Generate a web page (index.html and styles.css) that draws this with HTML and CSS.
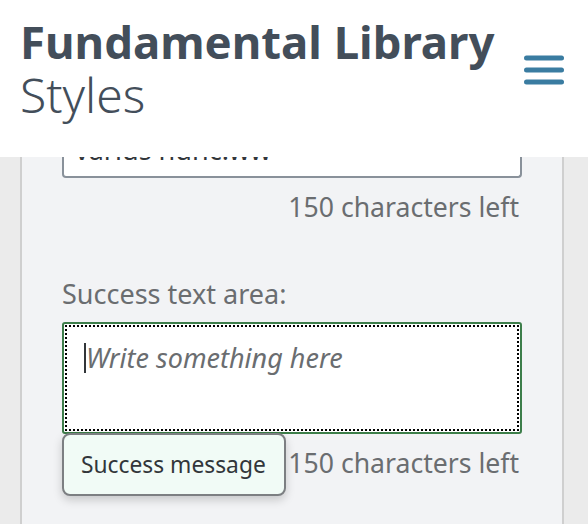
FILE: index.html
```html
<!DOCTYPE html>
<html lang="en">
<head>
<meta charset="utf-8">
<title>Fundamental Library Styles</title>
<link rel="stylesheet" href="styles.css">
</head>
<body>
<header class="site-header">
  <div class="brand">
    <div class="brand-title">Fundamental Library</div>
    <div class="brand-sub">Styles</div>
  </div>
  <button class="menu-btn" aria-label="Menu">
    <svg width="40" height="30" viewBox="0 0 40 30">
      <g stroke="#3a7ca1" stroke-width="5" stroke-linecap="round">
        <line x1="2.5" y1="3" x2="37.5" y2="3"/>
        <line x1="2.5" y1="15" x2="37.5" y2="15"/>
        <line x1="2.5" y1="27" x2="37.5" y2="27"/>
      </g>
    </svg>
  </button>
</header>
<main class="page">
  <section class="panel">
    <div class="field">
      <div class="input">varius nunc.ww</div>
      <div class="counter">150 characters left</div>
    </div>
    <div class="field field-success">
      <label class="label">Success text area:</label>
      <div class="textarea">
        <span class="caret"></span><span class="placeholder">Write something here</span>
      </div>
      <div class="counter counter-2">150 characters left</div>
      <div class="popover">Success message</div>
    </div>
  </section>
</main>
</body>
</html>
```
FILE: styles.css
```css
* { box-sizing: border-box; }
html, body { margin: 0; padding: 0; }
body {
  background: #ebebeb;
  font-family: "Noto Sans", "Open Sans", sans-serif;
  color: #32363a;
  height: 524px;
  overflow: hidden;
}
.site-header {
  position: fixed;
  top: 0; left: 0; right: 0;
  height: 157px;
  background: #fff;
  display: flex;
  align-items: flex-start;
  justify-content: space-between;
  padding: 14px 24px 0 20px;
  z-index: 10;
}
.brand-title {
  font-size: 45.5px;
  font-weight: 700;
  line-height: 54px;
  color: #434e5a;
}
.brand-sub {
  font-size: 48px;
  font-weight: 300;
  line-height: 54px;
  color: #434e5a;
}
.menu-btn {
  margin-top: 41px;
  padding: 0;
  border: 0;
  background: none;
  display: block;
}
.menu-btn svg { display: block; }
.page {
  margin: 0 24px 0 20px;
  height: 524px;
}
.panel {
  background: #f2f3f5;
  border-left: 2px solid #cfcfcf;
  border-right: 2px solid #cfcfcf;
  height: 100%;
  padding: 122px 40px 0;
}
.input {
  height: 56px;
  background: #fff;
  border: 2px solid #89919a;
  border-top: 0;
  border-radius: 0 0 4px 4px;
  font-size: 27px;
  line-height: 32px;
  padding: 12px 11px 0;
  color: #32363a;
}
.counter {
  text-align: right;
  font-size: 26.6px;
  line-height: 32px;
  color: #6a6d70;
  padding-right: 3px;
  margin-top: 13px;
}
.field-success {
  position: relative;
  margin-top: 55px;
}
.label {
  display: block;
  font-size: 27px;
  line-height: 32px;
  color: #6a6d70;
}
.textarea {
  margin-top: 12px;
  height: 112px;
  background: #fff;
  border: 2px solid #3d7e4a;
  border-radius: 3px;
  outline: 2px dotted #000;
  outline-offset: -5px;
  padding: 18px 20px 0;
  font-size: 27px;
  line-height: 32px;
  display: flex;
  align-items: flex-start;
}
.caret {
  display: inline-block;
  width: 2px;
  height: 30px;
  background: #32363a;
  margin-top: 1px;
}
.placeholder {
  font-style: italic;
  color: #6a6d70;
}
.counter-2 { margin-top: 13px; }
.popover {
  position: absolute;
  left: 0;
  top: 155px;
  width: 224px;
  height: 63px;
  background: #f1fbf6;
  border: 2px solid #7c7f82;
  border-radius: 8px;
  box-shadow: 0 4px 10px rgba(0,0,0,0.18);
  font-size: 22.8px;
  line-height: 59px;
  padding-left: 17px;
  color: #32363a;
  white-space: nowrap;
}
```
